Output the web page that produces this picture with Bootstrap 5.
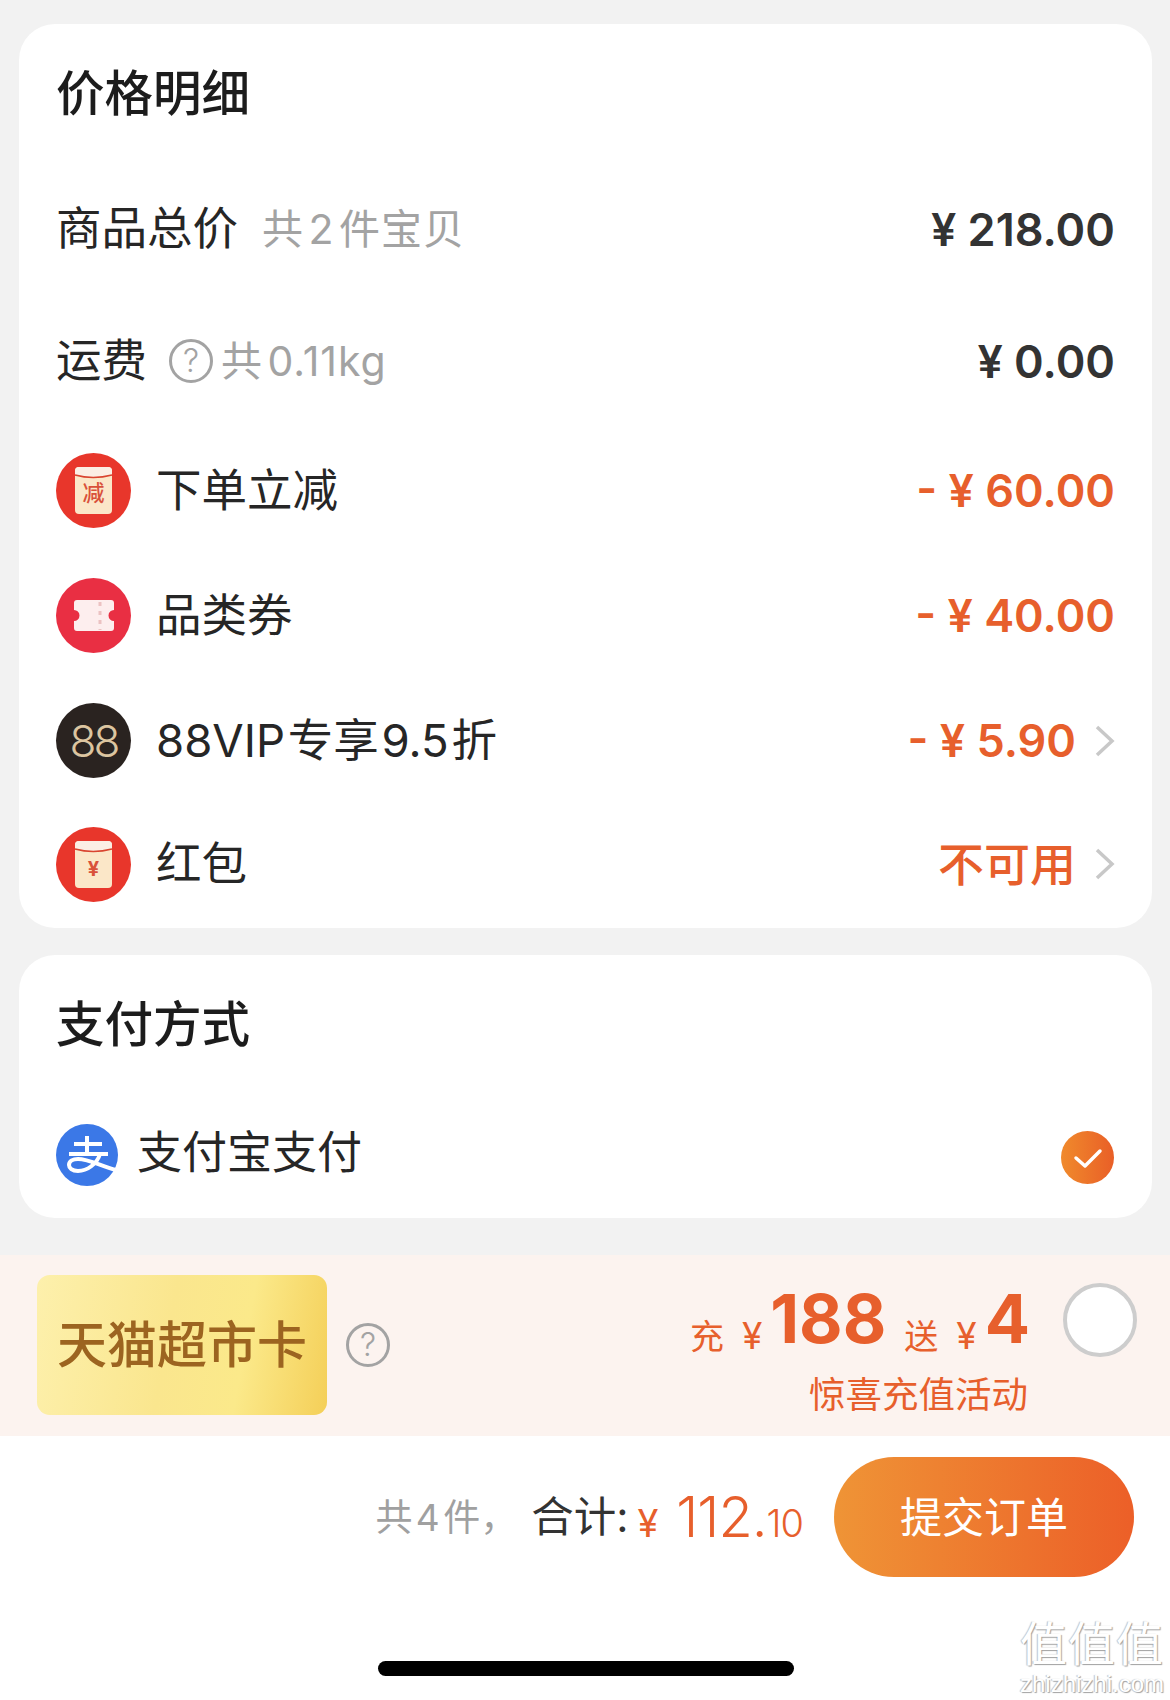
<!DOCTYPE html>
<html lang="zh-CN">
<head>
    <meta charset="UTF-8">
    <meta name="viewport" content="width=device-width, initial-scale=1.0">
    <title>价格明细</title>
    <link rel="stylesheet" href="https://cdn.jsdelivr.net/npm/bootstrap@5.3.0/dist/css/bootstrap.min.css">
    <script src="https://cdn.jsdelivr.net/npm/bootstrap@5.3.0/dist/js/bootstrap.bundle.min.js"></script>
    <style>
        body {
            background-color: #f2f2f2;
            color: #222;
            font-family: Inter, "Noto Sans CJK SC", sans-serif;
            height: 1700px;
            overflow: hidden;
            position: relative;
        }
        .cards-wrap { padding: 24px 18px 0 19px; }
        .order-card { border: 0; border-radius: 36px; padding: 0 37px 0 38px; }
        .order-card + .order-card { margin-top: 27px; }
        .card-head { font-size: 48.5px; font-weight: 500; color: #1c1c1c; margin-left: -1px; }
        .head-price { height: 140px; }
        .head-pay { height: 135px; padding-top: 6px; }
        .row-goods { height: 130px; }
        .row-ship { height: 134px; }
        .row-promo { height: 125px; }
        .row-promo-end { height: 122px; margin-bottom: 3px; }
        .row-pay { height: 128px; }
        .row-label { font-size: 45.500px; color: #262626; line-height: 1; word-spacing: -10px; margin-left: -1px; }
        .pay-label { font-size: 45px; margin-bottom: 3px; }
        .row-note { font-size: 41px; color: #a3a3a3; line-height: 1; word-spacing: -8px; letter-spacing: 1px; }
        .row-amount { font-size: 45px; font-weight: 600; color: #333; line-height: 1; white-space: pre; }
        .row-amount.is-off { color: #e75f2c; }
        .row-off-text { font-size: 46px; font-weight: 500; color: #e75f2c; line-height: 1; }
        .promo-icon { width: 75px; height: 75px; flex: none; margin-right: 26px; margin-left: -1px; }
        .pay-icon { width: 62px; height: 62px; flex: none; margin: 2px 20px 0 -1px; }
        .vip-icon {
            background: #2a2320; color: #dcc5a0; border-radius: 50%;
            font-size: 44px; font-weight: 300; letter-spacing: -3px;
        }
        .chevron { width: 21px; height: 34px; margin-left: 18px; }
        .help-mark {
            width: 44px; height: 44px; border: 3px solid #a3a3a3; border-radius: 50%;
            color: #a3a3a3; font-size: 32px; font-weight: 300; line-height: 1; flex: none;
        }
        .ship-help { margin-left: 22px; margin-right: 8px; }
        .check-mark { width: 53px; height: 53px; margin-top: 6px; margin-right: 1px; }

        .topup-band {
            margin-top: 37px; height: 181px; background: #fcf3ef;
            padding: 19px 33px 21px 37px;
        }
        .market-card {
            width: 290px; height: 140px; border-radius: 13px;
            background: linear-gradient(100deg, #fdf0ac 0%, #fae68e 45%, #fbe98a 70%, #f4cf58 100%);
            color: #9c6420; font-size: 50px; font-weight: 500; line-height: 1; white-space: nowrap;
        }
        .market-help { margin-left: 19px; }
        .topup-text { color: #e75f2c; text-align: right; margin-right: 33px; margin-top: 10px; }
        .topup-small { font-size: 34px; line-height: 1; margin-bottom: -2px; }
        .topup-yen { font-size: 37px; line-height: 1; margin-bottom: -2px; margin-left: 18px; margin-right: 8px; }
        .topup-big { font-size: 67px; font-weight: 700; line-height: 1; }
        .topup-after { margin-left: 18px; }
        .topup-sub { font-size: 36.500px; line-height: 1; margin-top: 25px; margin-right: 2px; }
        .topup-radio {
            width: 74px; height: 74px; border-radius: 50%; background: #fff;
            border: 4px solid #cdcdcd; flex: none; margin-top: -50px;
        }

        .footer-bar { background: #fff; height: 264px; padding: 21px 36px 0 0; }
        .sum-wrap { height: 120px; }
        .sum-count { font-size: 37px; color: #a0a0a0; line-height: 1; word-spacing: -7px; }
        .sum-label { font-size: 42.500px; color: #333; line-height: 1; margin-left: 14px; }
        .sum-price { color: #e75f2c; line-height: 1; margin-left: 9px; margin-right: 31px; font-weight: 300; }
        .sum-yen { font-size: 38px; font-weight: 400; margin-right: 18px; }
        .sum-int { font-size: 56px; letter-spacing: -1px; }
        .sum-dec { font-size: 38px; letter-spacing: -1px; }
        .submit-btn {
            width: 300px; height: 120px; border: 0; border-radius: 60px; color: #fff;
            font-size: 42px; background: linear-gradient(90deg, #ef9436, #ec5f28);
        }
        .home-bar {
            position: absolute; left: 378px; top: 1661px; width: 416px; height: 15px;
            background: #000; border-radius: 8px;
        }
        .site-mark {
            position: absolute; right: 5px; top: 1620px; width: 146px; text-align: center;
            color: #fff; line-height: 1; white-space: nowrap;
            text-shadow: 1px 1px 1px #a0a0a0, -1px 0 1px #c0c0c0;
        }
        .site-mark-top { font-size: 47px; letter-spacing: 1px; }
        .site-mark-sub { font-size: 24px; font-family: "Liberation Sans", sans-serif; margin-top: 5px; }
    </style>
</head>
<body>
    <div class="cards-wrap">
        <div class="card order-card">
            <div class="card-head head-price d-flex align-items-center">价格明细</div>

            <div class="row-goods d-flex align-items-center justify-content-between">
                <div class="d-flex align-items-center">
                    <span class="row-label">商品总价</span>
                    <span class="row-note ms-4">共 2 件宝贝</span>
                </div>
                <span class="row-amount">¥ 218.00</span>
            </div>

            <div class="row-ship d-flex align-items-center justify-content-between">
                <div class="d-flex align-items-center">
                    <span class="row-label">运费</span>
                    <span class="help-mark ship-help d-flex align-items-center justify-content-center">?</span>
                    <span class="row-note">共 0.11kg</span>
                </div>
                <span class="row-amount">¥ 0.00</span>
            </div>

            <div class="row-promo d-flex align-items-center justify-content-between">
                <div class="d-flex align-items-center">
                    <svg class="promo-icon" viewBox="0 0 75 75">
                        <circle cx="37.5" cy="37.5" r="37.5" fill="#e8362b"/>
                        <rect x="19" y="14" width="37" height="47" rx="4" fill="#fbe7c8"/>
                        <path d="M19 18a4 4 0 0 1 4-4h29a4 4 0 0 1 4 4v4q-18 5-37 0z" fill="#fbeee4"/>
                        <path d="M19 22q18 5 37 0" fill="none" stroke="#d9442f" stroke-width="1.500"/>
                        <text x="37.500" y="48" text-anchor="middle" font-size="22" font-weight="500" fill="#d9513a" font-family="Noto Sans CJK SC">减</text>
                    </svg>
                    <span class="row-label">下单立减</span>
                </div>
                <span class="row-amount is-off">- ¥ 60.00</span>
            </div>

            <div class="row-promo d-flex align-items-center justify-content-between">
                <div class="d-flex align-items-center">
                    <svg class="promo-icon" viewBox="0 0 75 75">
                        <circle cx="37.5" cy="37.5" r="37.5" fill="#e92f43"/>
                        <path d="M21 22h34a3 3 0 0 1 3 3v7a5.500 5.500 0 0 0 0 11v7a3 3 0 0 1-3 3H21a3 3 0 0 1-3-3v-7a5.500 5.500 0 0 0 0-11v-7a3 3 0 0 1 3-3z" fill="#fdeeee"/>
                        <path d="M44 24v28" stroke="#ecc2c2" stroke-width="3" stroke-dasharray="4 5"/>
                    </svg>
                    <span class="row-label">品类券</span>
                </div>
                <span class="row-amount is-off">- ¥ 40.00</span>
            </div>

            <div class="row-promo d-flex align-items-center justify-content-between">
                <div class="d-flex align-items-center">
                    <span class="promo-icon vip-icon d-flex align-items-center justify-content-center">88</span>
                    <span class="row-label">88VIP 专享 9.5 折</span>
                </div>
                <div class="d-flex align-items-center">
                    <span class="row-amount is-off">- ¥ 5.90</span>
                    <svg class="chevron" viewBox="0 0 21 34"><path d="M3 3l15 14L3 31" fill="none" stroke="#c8c8c8" stroke-width="3.500"/></svg>
                </div>
            </div>

            <div class="row-promo-end d-flex align-items-center justify-content-between">
                <div class="d-flex align-items-center">
                    <svg class="promo-icon" viewBox="0 0 75 75">
                        <circle cx="37.5" cy="37.5" r="37.5" fill="#e8362b"/>
                        <rect x="19" y="14" width="37" height="47" rx="4" fill="#fbe7c8"/>
                        <path d="M19 18a4 4 0 0 1 4-4h29a4 4 0 0 1 4 4v4q-18 5-37 0z" fill="#fbeee4"/>
                        <path d="M19 22q18 5 37 0" fill="none" stroke="#d9442f" stroke-width="1.500"/>
                        <text x="37.500" y="49" text-anchor="middle" font-size="20" font-weight="700" fill="#d9513a" font-family="Inter">¥</text>
                    </svg>
                    <span class="row-label">红包</span>
                </div>
                <div class="d-flex align-items-center">
                    <span class="row-off-text">不可用</span>
                    <svg class="chevron" viewBox="0 0 21 34"><path d="M3 3l15 14L3 31" fill="none" stroke="#c8c8c8" stroke-width="3.500"/></svg>
                </div>
            </div>
        </div>

        <div class="card order-card">
            <div class="card-head head-pay d-flex align-items-center">支付方式</div>
            <div class="row-pay d-flex align-items-center justify-content-between">
                <div class="d-flex align-items-center">
                    <svg class="pay-icon" viewBox="0 0 62 62">
                        <circle cx="31" cy="31" r="31" fill="#3b78e7"/>
                        <path d="M18 20h28M31 12v18M13 30h39" fill="none" stroke="#fff" stroke-width="4"/>
                        <path d="M44 30c-3 10-13 17-22 17-6 0-9-3-9-6 0-4 4-6 9-6 10 0 21 6 38 11" fill="none" stroke="#fff" stroke-width="4"/>
                    </svg>
                    <span class="row-label pay-label">支付宝支付</span>
                </div>
                <svg class="check-mark" viewBox="0 0 53 53">
                    <defs>
                        <linearGradient id="checkFill" x1="0" x2="1" y1="0" y2="0">
                            <stop offset="0" stop-color="#f08a2c"/>
                            <stop offset="1" stop-color="#e95f27"/>
                        </linearGradient>
                    </defs>
                    <circle cx="26.500" cy="26.500" r="26.500" fill="url(#checkFill)"/>
                    <path d="M15 27l9 8 15-15" fill="none" stroke="#fff" stroke-width="3.500" stroke-linecap="round" stroke-linejoin="round"/>
                </svg>
            </div>
        </div>
    </div>

    <div class="topup-band d-flex align-items-center justify-content-between">
        <div class="d-flex align-items-center">
            <div class="market-card d-flex align-items-center justify-content-center">天猫超市卡</div>
            <span class="help-mark market-help d-flex align-items-center justify-content-center">?</span>
        </div>
        <div class="d-flex align-items-center">
            <div class="topup-text">
                <div class="d-flex align-items-end justify-content-end">
                    <span class="topup-small">充</span>
                    <span class="topup-yen">¥</span>
                    <span class="topup-big">188</span>
                    <span class="topup-small topup-after">送</span>
                    <span class="topup-yen">¥</span>
                    <span class="topup-big">4</span>
                </div>
                <div class="topup-sub">惊喜充值活动</div>
            </div>
            <div class="topup-radio"></div>
        </div>
    </div>

    <div class="footer-bar d-flex align-items-start justify-content-end">
        <div class="sum-wrap d-flex align-items-center">
            <span class="sum-count">共 4 件，</span>
            <span class="sum-label">合计:</span>
            <span class="sum-price"><span class="sum-yen">¥</span><span class="sum-int">112.</span><span class="sum-dec">10</span></span>
        </div>
        <button class="btn submit-btn" type="button">提交订单</button>
    </div>

    <div class="home-bar"></div>
    <div class="site-mark">
        <div class="site-mark-top">值值值</div>
        <div class="site-mark-sub">zhizhizhi.com</div>
    </div>
</body>
</html>
